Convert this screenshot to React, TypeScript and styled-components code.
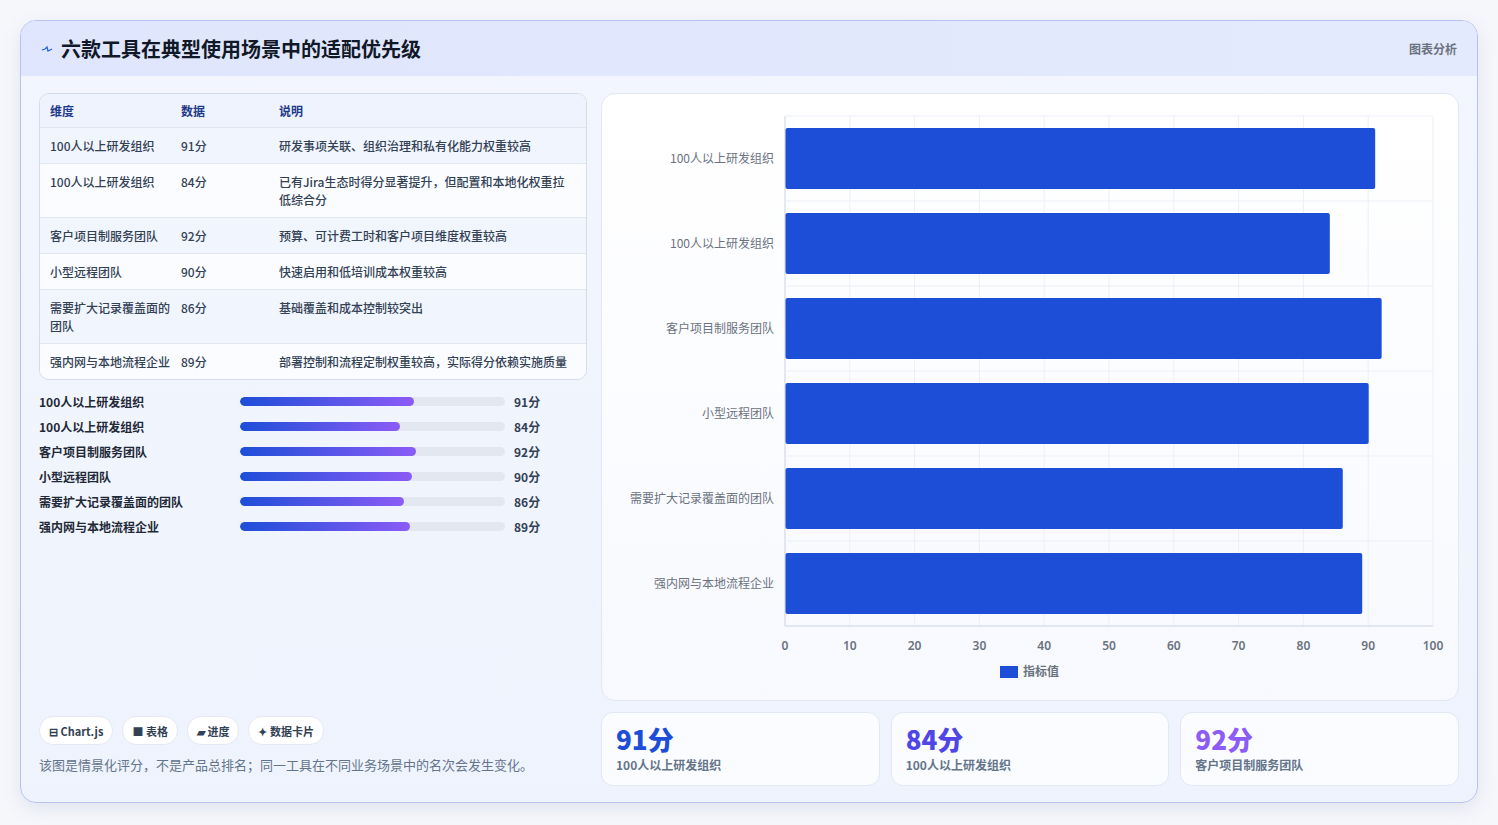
import React from "react";
import styled, { createGlobalStyle } from "styled-components";

const Global = createGlobalStyle`
  html, body { margin: 0; padding: 0; background: #f6f7fb; }
  body { font-family: "Noto Sans CJK SC", "Noto Sans", sans-serif; color: #1e293b; }
`;

const Page = styled.div`
  padding: 20px 20px 22px 20px;
  width: 1458px;
`;
const Card = styled.div`
  height: 783px;
  box-sizing: border-box;
  border: 1px solid #b8c2ee;
  border-radius: 16px;
  background: linear-gradient(180deg, #f3f6fe 0%, #eef3fd 100%);
  box-shadow: 0 6px 18px rgba(80, 100, 160, 0.12);
  overflow: hidden;
  display: flex;
  flex-direction: column;
`;
const Header = styled.div`
  height: 55px;
  flex: none;
  display: flex;
  align-items: center;
  justify-content: space-between;
  padding: 0 20px 0 20px;
  background: linear-gradient(90deg, #dfe6fd 0%, #e3eafd 100%);
`;
const Title = styled.h1`
  margin: 0;
  font-size: 20px;
  font-weight: 700;
  color: #111827;
  display: flex;
  align-items: center;
  gap: 8px;
`;
const HeaderTag = styled.span`
  font-size: 12px;
  color: #6b7280;
  font-weight: 600;
`;
const Body = styled.div`
  flex: 1;
  display: grid;
  grid-template-columns: 548px 858px;
  gap: 14px;
  padding: 17px 18px 17px 18px;
`;
const Left = styled.div`
  display: flex;
  flex-direction: column;
`;
const Table = styled.div`
  border: 1px solid #d5dbe8;
  border-radius: 10px;
  overflow: hidden;
  background: #f8faff;
`;
const Row = styled.div<{ $head?: boolean; $alt?: boolean }>`
  display: grid;
  grid-template-columns: 131px 98px 1fr;
  padding: ${(p) => (p.$head ? "8px 10px 7px" : "9px 10px 8px")};
  border-top: ${(p) => (p.$head ? "none" : "1px solid #e1e6f0")};
  background: ${(p) => (p.$head ? "#eef3fd" : p.$alt ? "#f1f5fd" : "#fafcff")};
  font-size: 12px;
  line-height: 18px;
  font-weight: ${(p) => (p.$head ? 600 : 500)};
  color: ${(p) => (p.$head ? "#1e3a8a" : "#334155")};
`;
const Progress = styled.div`
  margin-top: 9px;
  display: flex;
  flex-direction: column;
`;
const PRow = styled.div`
  display: grid;
  grid-template-columns: 201px 274px 1fr;
  gap: 0;
  align-items: center;
  height: 25px;
  font-size: 12px;
  font-weight: 600;
  color: #1f2937;
`;
const Track = styled.div`
  height: 9px;
  border-radius: 5px;
  background: #e3e7ef;
  margin-right: 9px;
  overflow: hidden;
`;
const Fill = styled.div`
  height: 100%;
  border-radius: 5px;
  background: linear-gradient(90deg, #1d4ed8 0%, #8b5cf6 100%);
`;
const PVal = styled.span`
  font-weight: 700;
  color: #334155;
  padding-left: 0;
`;
const Spacer = styled.div`
  flex: 1;
`;
const Chips = styled.div`
  display: flex;
  gap: 9px;
`;
const Chip = styled.span`
  display: inline-flex;
  align-items: center;
  gap: 3px;
  height: 27px;
  padding: 0 9px;
  border-radius: 14px;
  background: #fff;
  border: 1px solid #e5e9f2;
  font-size: 11px;
  font-weight: 600;
  color: #334155;
`;
const Note = styled.p`
  margin: 10px 0 12px 0;
  font-size: 13px;
  color: #64748b;
`;
const Right = styled.div`
  display: flex;
  flex-direction: column;
  gap: 11px;
`;
const ChartCard = styled.div`
  height: 608px;
  box-sizing: border-box;
  border: 1px solid #e1e7f3;
  border-radius: 14px;
  background: linear-gradient(180deg, #ffffff 0%, #f7f9fe 100%);
`;
const Stats = styled.div`
  display: grid;
  grid-template-columns: repeat(3, 1fr);
  gap: 11px;
`;
const Stat = styled.div`
  height: 74px;
  box-sizing: border-box;
  border: 1px solid #e1e7f3;
  border-radius: 12px;
  background: #fbfcff;
  padding: 10px 14px;
`;
const StatNum = styled.div<{ $c: string }>`
  font-size: 26px;
  font-weight: 800;
  line-height: 32px;
  color: ${(p) => p.$c};
`;
const StatLbl = styled.div`
  font-size: 12px;
  font-weight: 600;
  color: #64748b;
  margin-top: 1px;
`;

const rows = [
  ["100人以上研发组织", "91分", "研发事项关联、组织治理和私有化能力权重较高"],
  ["100人以上研发组织", "84分", "已有Jira生态时得分显著提升，但配置和本地化权重拉低综合分"],
  ["客户项目制服务团队", "92分", "预算、可计费工时和客户项目维度权重较高"],
  ["小型远程团队", "90分", "快速启用和低培训成本权重较高"],
  ["需要扩大记录覆盖面的团队", "86分", "基础覆盖和成本控制较突出"],
  ["强内网与本地流程企业", "89分", "部署控制和流程定制权重较高，实际得分依赖实施质量"],
];
const vals = [91, 84, 92, 90, 86, 89];

function Chart() {
  const x0 = 183, x1 = 831, y0 = 22, rowH = 85;
  const sx = (v: number) => x0 + ((x1 - x0) * v) / 100;
  return (
    <svg width="856" height="606" style={{ display: "block" }}>
      {Array.from({ length: 11 }).map((_, i) => (
        <line key={"v" + i} x1={sx(i * 10)} x2={sx(i * 10)} y1={y0} y2={y0 + 6 * rowH + (i === 0 ? 0 : 0)} stroke={i === 0 ? "#cbd2e0" : "#eceff5"} />
      ))}
      {Array.from({ length: 7 }).map((_, i) => (
        <line key={"h" + i} x1={x0} x2={x1} y1={y0 + i * rowH} y2={y0 + i * rowH} stroke={i === 6 ? "#cbd2e0" : "#eceff5"} />
      ))}
      {rows.map((r, i) => (
        <g key={i}>
          <rect x={x0 + 0.5} y={y0 + i * rowH + 12} width={sx(vals[i]) - x0} height={61} rx={2} fill="#1d4ed8" />
          <text x={172} y={y0 + i * rowH + 47} textAnchor="end" fontSize="12" fill="#6b7280" fontFamily="Noto Sans CJK SC, sans-serif">{r[0]}</text>
        </g>
      ))}
      {Array.from({ length: 11 }).map((_, i) => (
        <text key={"t" + i} x={sx(i * 10)} y={556} textAnchor="middle" fontSize="12" fontWeight="600" fill="#6b7280" fontFamily="Noto Sans, sans-serif">{i * 10}</text>
      ))}
      <rect x={398} y={572} width={18} height={12} fill="#1d4ed8" />
      <text x={421} y={582} fontSize="12" fontWeight="600" fill="#6b7280" fontFamily="Noto Sans CJK SC, sans-serif">指标值</text>
    </svg>
  );
}

export default function App() {
  return (
    <>
      <Global />
      <Page>
        <Card>
          <Header>
            <Title>
              <svg width="12" height="8" viewBox="0 0 12 8"><path d="M1 5 L4 4 L6 2 L7 6 L11 4" stroke="#2563eb" strokeWidth="1.3" fill="none" /></svg>
              六款工具在典型使用场景中的适配优先级
            </Title>
            <HeaderTag>图表分析</HeaderTag>
          </Header>
          <Body>
            <Left>
              <Table>
                <Row $head><span>维度</span><span>数据</span><span>说明</span></Row>
                {rows.map((r, i) => (
                  <Row key={i} $alt={i % 2 === 0}><span>{r[0]}</span><span>{r[1]}</span><span>{r[2]}</span></Row>
                ))}
              </Table>
              <Progress>
                {rows.map((r, i) => (
                  <PRow key={i}>
                    <span>{r[0]}</span>
                    <Track><Fill style={{ width: `${vals[i] * 0.72}%` }} /></Track>
                    <PVal>{r[1]}</PVal>
                  </PRow>
                ))}
              </Progress>
              <Spacer />
              <Chips>
                <Chip>⊟ Chart.js</Chip>
                <Chip>■ 表格</Chip>
                <Chip>▰ 进度</Chip>
                <Chip>✦ 数据卡片</Chip>
              </Chips>
              <Note>该图是情景化评分，不是产品总排名；同一工具在不同业务场景中的名次会发生变化。</Note>
            </Left>
            <Right>
              <ChartCard><Chart /></ChartCard>
              <Stats>
                <Stat><StatNum $c="#1d4ed8">91分</StatNum><StatLbl>100人以上研发组织</StatLbl></Stat>
                <Stat><StatNum $c="#4f46e5">84分</StatNum><StatLbl>100人以上研发组织</StatLbl></Stat>
                <Stat><StatNum $c="#8b5cf6">92分</StatNum><StatLbl>客户项目制服务团队</StatLbl></Stat>
              </Stats>
            </Right>
          </Body>
        </Card>
      </Page>
    </>
  );
}
